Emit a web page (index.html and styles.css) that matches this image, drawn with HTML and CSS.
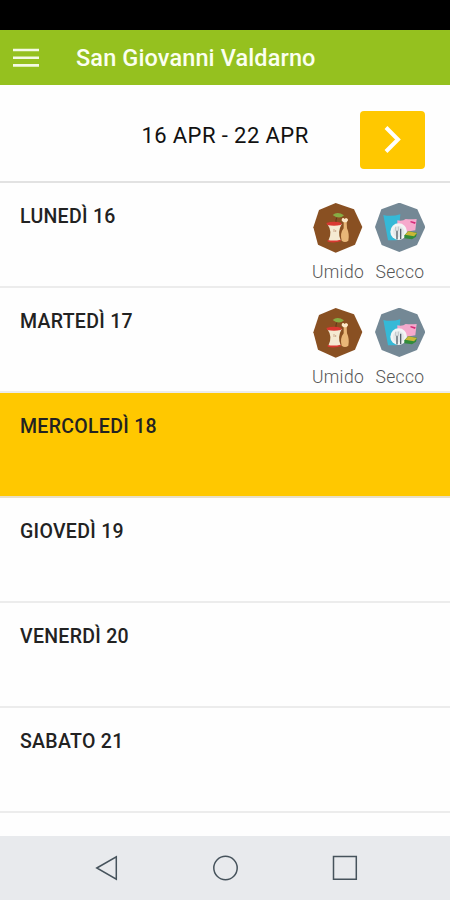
FILE: index.html
```html
<!DOCTYPE html>
<html lang="it">
<head>
<meta charset="utf-8">
<title>San Giovanni Valdarno</title>
<link rel="stylesheet" href="styles.css">
</head>
<body>
<svg width="0" height="0" class="defs">
  <symbol id="umido" viewBox="39 24 150 150">
    <path d="M107 24 162 43 187 96 165 149 107 173 54 149 40 97 57 45Z" fill="#895022"/>
    <path d="M98 60q14-13 34 1-14 14-34-1Z" fill="#86ad45"/>
    <path d="M108 84q-1-10 2-16" fill="none" stroke="#583019" stroke-width="2.5"/>
    <path d="M82 87q17 24 3 50 19 6 37-1-11-24 3-49Z" fill="#f5ead2"/>
    <path d="M79 84q23-7 46 0l-3 6q-20 5-40 0ZM83 135q19 4 39-1v5q-19 6-39 1Z" fill="#d93831"/>
    <path d="M102 102v9M107 105v6" stroke="#b88b6c" stroke-width="2"/>
    <path d="M126 72q3-6 7 0 9-5 11 3l-4 7 1 18q8 17 4 37-10 8-20 0-6-22 6-37l0-20q-8-3-5-8Z" fill="#e9b778"/>
    <path d="M126 72q3-6 7 0 9-5 11 3l-4 7h-9q-8-4-5-10Z" fill="#fbe9cb"/>
  </symbol>
  <symbol id="secco" viewBox="30 24 150 150">
    <path d="M103 23 157 43 181 96 156 150 103 171 50 150 30 96 49 43Z" fill="#748895"/>
    <path d="M55 60q25 6 51-2l-2 22-9 56H69Z" fill="#35b9d7"/>
    <path d="M97 76q17 3 25-4 16 2 33 0l-4 34-26 4-28-12Z" fill="#f6a9cc"/>
    <path d="M137 78l15 4-2 5-14-5Z" fill="#d52b78"/>
    <circle cx="101" cy="110" r="25" fill="#f2f5f5"/>
    <circle cx="101" cy="110" r="17" fill="#e4e9ea"/>
    <path d="M96 108v25M107 101v31" stroke="#55606a" stroke-width="4"/>
    <path d="M92 95v12h8V95" fill="none" stroke="#aab2b5" stroke-width="2"/>
    <path d="M118 121l12-12 26 4-3 12-12 8-23-3Z" fill="#318b3a"/>
    <path d="M120 119l10-10 26 5-9 10Z" fill="#c9b735"/>
  </symbol>
</svg>
<div class="status"></div>
<header class="bar">
  <svg class="menu" width="26" height="20" viewBox="0 0 26 20"><path d="M0 2h26M0 9.7h26M0 17.4h26" stroke="#f4fae4" stroke-width="2.6"/></svg>
  <h1>San Giovanni Valdarno</h1>
</header>
<main>
  <section class="week">
    <span class="range">16 APR - 22 APR</span>
    <button class="next" aria-label="Settimana successiva"><svg width="64" height="58" viewBox="0 0 64 58"><path d="M26 16.5 38 28.5 26 40.5" fill="none" stroke="#fff" stroke-width="4"/></svg></button>
  </section>
  <section class="day"><h2>LUNEDÌ 16</h2>
    <div class="wastes">
      <div class="waste"><svg><use href="#umido"/></svg><span>Umido</span></div>
      <div class="waste"><svg><use href="#secco"/></svg><span>Secco</span></div>
    </div>
  </section>
  <section class="day"><h2>MARTEDÌ 17</h2>
    <div class="wastes">
      <div class="waste"><svg><use href="#umido"/></svg><span>Umido</span></div>
      <div class="waste"><svg><use href="#secco"/></svg><span>Secco</span></div>
    </div>
  </section>
  <section class="day today"><h2>MERCOLEDÌ 18</h2></section>
  <section class="day"><h2>GIOVEDÌ 19</h2></section>
  <section class="day"><h2>VENERDÌ 20</h2></section>
  <section class="day"><h2>SABATO 21</h2></section>
</main>
<nav class="nav">
  <svg width="450" height="64" viewBox="0 0 450 64" fill="none" stroke="#46535c" stroke-width="1.5"><path d="M96.8 32 116.3 20.8V43.2Z"/><circle cx="225.5" cy="32" r="11.7"/><path d="M333.5 20.5h22.8v22.8h-22.8Z"/></svg>
</nav>
</body>
</html>
```
FILE: styles.css
```css
* { box-sizing: border-box; }
body { margin: 0; width: 450px; height: 900px; display: flex; flex-direction: column; overflow: hidden; background: #fefefe; font-family: Roboto, "Liberation Sans", sans-serif; color: #222; }
.defs { position: absolute; }
.status { height: 30px; flex: none; background: #000; }
.bar { height: 55px; flex: none; background: #95c11f; display: flex; align-items: center; padding-left: 13px; }
.menu { margin-top: 1px; }
h1 { margin: 0 0 0 37px; font-size: 23.5px; line-height: 30px; font-weight: 500; letter-spacing: 0.12px; color: #fbfff0; white-space: nowrap; }
main { flex: 1; min-height: 0; overflow: hidden; }
.week { height: 98px; display: grid; grid-template-columns: 1fr auto 1fr; align-items: center; border-bottom: 2px solid #e2e2e2; padding: 14px 25px 0 25px; }
.range { grid-column: 2; font-size: 22px; line-height: 26px; letter-spacing: 0.42px; color: #111; margin-top: -9px; white-space: nowrap; }
.next { justify-self: end; width: 65px; height: 58px; padding: 0; border: 0; border-radius: 4px; background: #ffc800; }
.next svg { display: block; }
.day { height: 105px; display: flex; justify-content: space-between; border-bottom: 2px solid #ececec; padding: 20px 25px 0 20px; }
h2 { margin: 1px 0 0; font-size: 19.5px; line-height: 26px; font-weight: 500; letter-spacing: 0.3px; white-space: nowrap; }
.today { background: #ffc800; border-bottom-color: #e8dfc8; }
.wastes { display: flex; gap: 12px; }
.waste { width: 50px; display: flex; flex-direction: column; align-items: center; }
.waste svg { width: 50px; height: 50px; flex: none; }
.waste span { margin-top: 9px; font-size: 17.5px; line-height: 20px; font-weight: 300; letter-spacing: 0.35px; color: #555; white-space: nowrap; }
.nav { height: 64px; flex: none; background: #e8eaed; }
.nav svg { display: block; }
```
